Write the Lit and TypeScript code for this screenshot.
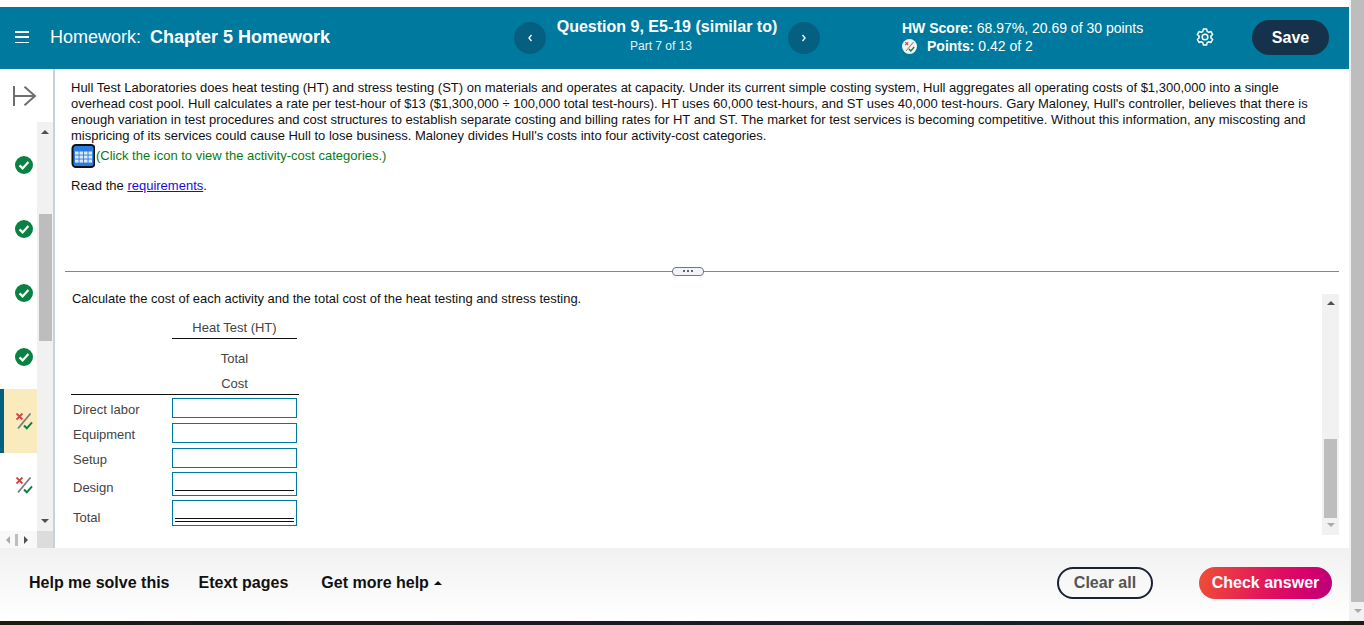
import { LitElement, html, css, svg } from "lit";
import { customElement } from "lit/decorators.js";

const check = html`<svg width="20" height="20" viewBox="0 0 20 20"><circle cx="10" cy="10" r="9" fill="#0a8043"/><path d="M5.6 10.4l3 3 5.8-6.4" fill="none" stroke="#fff" stroke-width="2.2"/></svg>`;
const partialPaths = svg`<path d="M.5.5l6 6M6.5.5l-6 6" stroke="#d0433f" stroke-width="1.8" fill="none"/><path d="M2 15.5L14.5.5" stroke="#7c7c7c" stroke-width="1.8" fill="none"/><path d="M8 12.5l2.8 2.8 5.2-6" stroke="#0a8043" stroke-width="2" fill="none"/>`;
const partial = html`<svg width="17" height="17" viewBox="0 0 17 17">${partialPaths}</svg>`;
const up = html`<i class="tri up"></i>`;
const down = html`<i class="tri down"></i>`;
const cells = [7.5, 11.5, 15.5].flatMap((y) =>
  [4, 8.5, 13, 17.5].map((x) => svg`<rect x=${x} y=${y} width="3.6" height="3.1" fill="#dbe9fc"/>`)
);

@customElement("app-root")
export class AppRoot extends LitElement {
  static styles = css`
    :host { display: block; width: 1364px; height: 625px; overflow: hidden; background: #fff; font-family: "Liberation Sans", Arial, sans-serif; color: #111; }
    * { box-sizing: border-box; }
    .top { display: flex; height: 621px; }
    .strip { height: 4px; background: linear-gradient(90deg, #1e1a12, #211623 40%, #16202c 70%, #1d1d14); }
    .page { width: 1349px; display: flex; flex-direction: column; padding-top: 7px; }
    .pagebar { width: 15px; background: #f1f1f1; padding-left: 2px; display: flex; flex-direction: column; align-items: center; }
    .pagebar .thumb { width: 13px; height: 602px; background: #bdbdbd; }
    .pagebar .tri { margin-top: 7px; }
    .tri { display: block; width: 0; height: 0; border-left: 4px solid transparent; border-right: 4px solid transparent; }
    .tri.up { border-bottom: 4px solid #505050; }
    .tri.down { border-top: 4px solid #505050; }
    .tri.lt { border-top-color: #aaa; }

    header { height: 62px; background: #00799e; color: #fff; display: flex; align-items: center; flex: none; }
    .burger { margin-left: 15px; width: 14px; height: 12px; margin-top: -2px; display: flex; flex-direction: column; justify-content: space-between; }
    .burger i { display: block; height: 1.5px; background: #fff; }
    .hw { margin-left: 21px; font-size: 18px; width: 464px; white-space: pre; margin-top: -2px; word-spacing: -0.5px; }
    .hw b { font-weight: 700; word-spacing: 0; }
    .circ { width: 32px; height: 32px; border-radius: 50%; background: #055f80; display: flex; align-items: center; justify-content: center; flex: none; }
    .qt { width: 242px; text-align: center; margin-top: -5px; }
    .qt b { display: block; font-size: 16px; line-height: 20px; }
    .qt span { display: block; font-size: 12px; line-height: 16px; margin-top: 1px; color: #e6f1f5; padding-right: 12px; }
    .score { margin-left: 82px; width: 285px; font-size: 14px; line-height: 18px; margin-top: -2px; }
    .score div { display: flex; align-items: center; white-space: pre; }
    .score svg { margin-right: 10px; }
    .gear { width: 20px; height: 20px; margin-right: 37px; margin-left: 8px; margin-top: -2px; }
    .save { width: 77px; height: 35px; border-radius: 18px; background: #16324a; font-weight: 700; font-size: 16px; display: flex; align-items: center; justify-content: center; margin-top: -2px; padding-top: 1px; }

    .body { flex: 1; display: flex; min-height: 0; }
    .side { width: 55px; border-right: 2px solid #c9cfdb; display: flex; flex-direction: column; flex: none; }
    .arrow { height: 53px; padding: 17px 0 0 13px; flex: none; }
    .mid { flex: 1; display: flex; min-height: 0; }
    .list { width: 37px; padding-top: 11px; }
    .row { height: 64px; display: flex; align-items: center; justify-content: center; padding-left: 11px; }
    .row.cur { background: #f9ebbd; border-left: 4px solid #05607f; padding-left: 8px; }
    .vs { width: 16px; background: #f1f1f1; display: flex; flex-direction: column; align-items: center; }
    .vs .up { margin-top: 8px; }
    .vs .thumb { width: 13px; height: 127px; background: #bdbdbd; margin-top: 80px; }
    .vs .down { margin-top: auto; margin-bottom: 8px; }
    .hs { height: 17px; display: flex; flex: none; align-items: center; background: #f8f8f8; }
    .hs .a { width: 0; height: 0; border-top: 4px solid transparent; border-bottom: 4px solid transparent; }
    .hs .l { border-right: 4px solid #aaa; margin-left: 6px; }
    .hs .bar { width: 3px; height: 12px; background: #bdbdbd; margin-left: 5px; }
    .hs .r { border-left: 4px solid #505050; margin-left: 6px; }
    .hs .corner { width: 16px; height: 17px; background: #dcdcdc; margin-left: auto; }

    .main { flex: 1; min-width: 0; display: flex; flex-direction: column; padding: 10px 10px 0 10px; }
    .q { padding-left: 6px; font-size: 13px; line-height: 16px; color: #111; height: 187px; flex: none; padding-top: 1px; }
    .q p { margin: 0; white-space: nowrap; }
    .q .tbl { display: flex; align-items: center; height: 24px; color: #0a7a14; }
    .q .tbl svg { margin-right: 1px; }
    .q .read { margin-top: 10px; }
    .q a { color: #1a0dd8; text-decoration: underline; }
    .split { display: flex; align-items: center; height: 10px; flex: none; }
    .split i { display: block; flex: 1; height: 1px; background: #7d8896; }
    .split i:first-child { flex: none; width: 607px; }
    .handle { width: 32px; height: 9px; border: 1px solid #6d7886; border-radius: 4px; background: #f2f4f7; display: flex; align-items: center; justify-content: center; gap: 2px; }
    .handle s { display: block; width: 2px; height: 2px; background: #5a6472; }
    .lower { display: flex; height: 241px; margin-top: 18px; flex: none; }
    .work { flex: 1; padding-left: 7px; font-size: 13px; }
    .work .lead { line-height: 16px; margin-top: -3px; font-size: 12.95px; }
    .grid { display: grid; grid-template-columns: 100px 125px 2px; margin-top: 12px; color: #444; }
    .hd { grid-column: 2; text-align: center; }
    .hd1 { line-height: 16px; height: 20px; border-bottom: 1px solid #111; padding-top: 1px; }
    .hd2 { line-height: 16px; padding-top: 12px; height: 32px; }
    .hd3 { line-height: 16px; padding-top: 5px; height: 23px; }
    .line { grid-column: 1 / 4; height: 1px; background: #111; margin-left: -1px; margin-bottom: 3px; }
    .lbl { grid-column: 1; padding-left: 1px; display: flex; align-items: center; padding-bottom: 3px; }
    .lbl.s { padding-bottom: 2px; }
    .lbl.d { padding-bottom: 0; padding-top: 2px; }
    .lbl.t { padding-bottom: 0; padding-top: 8px; }
    .inp { grid-column: 2; border: 1px solid #00799e; background: #fff; height: 20px; margin-bottom: 5px; }
    .inp.tight { margin-bottom: 4px; }
    .inp.one { height: 24px; margin-bottom: 4px; padding: 17px 2px 0; }
    .inp.one i { display: block; height: 1px; background: #111; }
    .inp.two { height: 26px; padding: 17px 2px 0; margin-bottom: 0; }
    .inp.two i { display: block; height: 1px; background: #111; margin-bottom: 2px; }
    .vs2 { width: 17px; background: #f1f1f1; display: flex; flex-direction: column; align-items: center; }
    .vs2 .up { margin-top: 7px; }
    .vs2 .thumb { width: 13px; height: 79px; background: #bdbdbd; margin-top: 134px; }
    .vs2 .down { margin-top: 5px; }

    footer { height: 73px; flex: none; background: linear-gradient(#f1f1f1, #fff); display: flex; align-items: center; font-size: 16px; font-weight: 700; padding-left: 29px; padding-bottom: 4px; }
    .more { display: flex; align-items: center; white-space: pre; }
    .more .tri { margin-left: 5px; border-bottom-color: #111; }
    .etext { margin-left: 29px; }
    .gmh { margin-left: 33px; }
    .spacer { flex: 1; }
    .clear { width: 96px; height: 32px; border: 2px solid #1a2233; border-radius: 16px; color: #555; display: flex; align-items: center; justify-content: center; }
    .check { width: 133px; height: 32px; border-radius: 16px; margin-left: 46px; margin-right: 17px; color: #fff; background: linear-gradient(100deg, #f04e37, #e0115f 55%, #d6006d 80%, #b80078); display: flex; align-items: center; justify-content: center; }
  `;

  render() {
    return html`
      <div class="top">
        <div class="page">
          <header>
            <div class="burger"><i></i><i></i><i></i></div>
            <div class="hw">Homework:  <b>Chapter 5 Homework</b></div>
            <div class="circ"><svg width="8" height="10" viewBox="0 0 8 10"><path d="M5.5 2L3 5l2.5 3" fill="none" stroke="#fff" stroke-width="1.3"/></svg></div>
            <div class="qt"><b>Question 9, E5-19 (similar to)</b><span>Part 7 of 13</span></div>
            <div class="circ"><svg width="8" height="10" viewBox="0 0 8 10"><path d="M2.5 2L5 5 2.5 8" fill="none" stroke="#fff" stroke-width="1.3"/></svg></div>
            <div class="score">
              <div><b>HW Score:</b> 68.97%, 20.69 of 30 points</div>
              <div><svg width="15" height="15" viewBox="0 0 15 15"><circle cx="7.5" cy="7.5" r="7.5" fill="#f3f3f3"/><path d="M3.2 3.2l3 3M6.2 3.2l-3 3" stroke="#d0433f" stroke-width="1.1"/><path d="M4 12L11.5 3" stroke="#7c7c7c" stroke-width="1"/><path d="M7 10l1.8 2 3.4-4" stroke="#0a8043" stroke-width="1.3" fill="none"/></svg><b>Points:</b> 0.42 of 2</div>
            </div>
            <svg class="gear" viewBox="0 0 24 24" fill="none" stroke="#fff" stroke-width="1.8" stroke-linejoin="round"><circle cx="12" cy="12" r="3.4"/><path d="M10 2.5h4l.6 2.8 1.9 1.1 2.7-.9 2 3.5-2.1 1.9v2.2l2.1 1.9-2 3.5-2.7-.9-1.9 1.1-.6 2.8h-4l-.6-2.8-1.9-1.1-2.7.9-2-3.5 2.1-1.9v-2.2L2.8 9l2-3.5 2.7.9 1.9-1.1z"/></svg>
            <div class="save">Save</div>
          </header>
          <div class="body">
            <div class="side">
              <div class="arrow"><svg width="24" height="20" viewBox="0 0 24 20" fill="none" stroke="#6f6f6f" stroke-width="2"><path d="M1 0v20M1 10h21M11.5.7L22 10l-10.5 9.3"/></svg></div>
              <div class="mid">
                <div class="list">
                  <div class="row">${check}</div>
                  <div class="row">${check}</div>
                  <div class="row">${check}</div>
                  <div class="row">${check}</div>
                  <div class="row cur">${partial}</div>
                  <div class="row">${partial}</div>
                </div>
                <div class="vs">${up}<div class="thumb"></div>${down}</div>
              </div>
              <div class="hs"><i class="a l"></i><i class="bar"></i><i class="a r"></i><i class="corner"></i></div>
            </div>
            <div class="main">
              <div class="q">
                <p>Hull Test Laboratories does heat testing (HT) and stress testing (ST) on materials and operates at capacity. Under its current simple costing system, Hull aggregates all operating costs of $1,300,000 into a single<br>overhead cost pool. Hull calculates a rate per test-hour of $13 ($1,300,000 ÷ 100,000 total test-hours). HT uses 60,000 test-hours, and ST uses 40,000 test-hours. Gary Maloney, Hull's controller, believes that there is<br>enough variation in test procedures and cost structures to establish separate costing and billing rates for HT and ST. The market for test services is becoming competitive. Without this information, any miscosting and<br>mispricing of its services could cause Hull to lose business. Maloney divides Hull's costs into four activity-cost categories.</p>
                <div class="tbl"><svg width="24" height="24" viewBox="0 0 24 24"><rect x="1.5" y="1" width="22" height="22" rx="3.5" fill="#2a7de1" stroke="#111" stroke-width="2"/>${cells}</svg>(Click the icon to view the activity-cost categories.)</div>
                <p class="read">Read the <a>requirements</a>.</p>
              </div>
              <div class="split"><i></i><div class="handle"><s></s><s></s><s></s></div><i></i></div>
              <div class="lower">
                <div class="work">
                  <div class="lead">Calculate the cost of each activity and the total cost of the heat testing and stress testing.</div>
                  <div class="grid">
                    <div class="hd hd1">Heat Test (HT)</div>
                    <div class="hd hd2">Total</div>
                    <div class="hd hd3">Cost</div>
                    <div class="line"></div>
                    <div class="lbl">Direct labor</div><div class="inp"></div>
                    <div class="lbl">Equipment</div><div class="inp"></div>
                    <div class="lbl s">Setup</div><div class="inp tight"></div>
                    <div class="lbl d">Design</div><div class="inp one"><i></i></div>
                    <div class="lbl t">Total</div><div class="inp two"><i></i><i></i></div>
                  </div>
                </div>
                <div class="vs2">${up}<div class="thumb"></div><i class="tri down lt"></i></div>
              </div>
            </div>
          </div>
          <footer>
            <span>Help me solve this</span>
            <span class="etext">Etext pages</span>
            <span class="more gmh">Get more help<i class="tri up"></i></span>
            <span class="spacer"></span>
            <span class="clear">Clear all</span>
            <span class="check">Check answer</span>
          </footer>
        </div>
        <div class="pagebar"><div class="thumb"></div><i class="tri down lt"></i></div>
      </div>
      <div class="strip"></div>
    `;
  }
}
